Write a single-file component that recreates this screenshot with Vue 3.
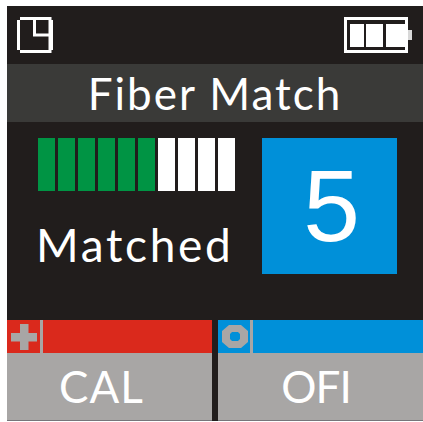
<script setup>
const bars = [1, 1, 1, 1, 1, 1, 0, 0, 0, 0]
</script>

<template>
  <div class="page">
    <div class="screen">
      <div class="status">
        <svg class="clock" width="36" height="36" viewBox="0 0 36 36">
          <path d="M3 1.500H33V34.500H3M1.500 3V33M34.500 3V33M17.500 1.500V18H34" fill="none" stroke="#fff" stroke-width="3" />
        </svg>
        <svg class="battery" width="68" height="36" viewBox="0 0 68 36">
          <rect x="1.500" y="1.500" width="61" height="33" fill="none" stroke="#fff" stroke-width="3" />
          <rect x="6" y="7" width="14" height="23" fill="#fff" />
          <rect x="22" y="7" width="17" height="23" fill="#fff" />
          <rect x="42" y="7" width="19" height="23" fill="#fff" />
          <rect x="64" y="13" width="4" height="10" fill="#d8d8d8" />
        </svg>
      </div>
      <div class="title">Fiber Match</div>
      <div class="main">
        <div class="left">
          <div class="bars">
            <span v-for="(b, i) in bars" :key="i" class="bar" :class="{ on: b }"></span>
          </div>
          <div class="state">Matched</div>
        </div>
        <div class="count">5</div>
      </div>
      <div class="keys">
        <div class="key">
          <div class="strip red">
            <div class="tag">
              <svg width="26" height="26" viewBox="0 0 26 26">
                <path d="M9 0H17.500V9H26V17.500H17.500V26H9V17.500H0V9H9Z" fill="#a8a6a5" />
              </svg>
            </div>
          </div>
          <div class="label cal">CAL</div>
        </div>
        <div class="key">
          <div class="strip blue">
            <div class="tag">
              <svg width="26" height="23" viewBox="0 0 26 23">
                <path d="M7 0H19L26 6V17L19 23H7L0 17V6ZM10 7L8 9V14L10 16H16L18 14V9L16 7Z" fill="#a8a6a5" fill-rule="evenodd" />
              </svg>
            </div>
          </div>
          <div class="label ofi">OFI</div>
        </div>
      </div>
    </div>
  </div>
</template>

<style>
html, body {
  background: #fff;
}
</style>

<style scoped>
.page {
  width: 423px;
  height: 422px;
  padding: 6px 0 1px 7px;
  box-sizing: border-box;
  font-family: Lato, "Open Sans", sans-serif;
  overflow: hidden;
}

.screen {
  height: 100%;
  display: flex;
  flex-direction: column;
  background: #211d1c;
  color: #fff;
}

.status {
  height: 58px;
  flex: none;
  display: flex;
  justify-content: space-between;
  align-items: flex-start;
  padding: 11px 11px 0 10px;
  box-sizing: border-box;
}

.title {
  height: 58px;
  flex: none;
  background: #3a3a38;
  text-align: center;
  font-size: 44px;
  line-height: 58px;
  letter-spacing: 2px;
}

.main {
  flex: 1;
  display: flex;
  justify-content: space-between;
  padding: 16px 26px 0 31px;
}

.bars {
  display: flex;
  gap: 3px;
}

.bar {
  width: 17px;
  height: 53px;
  background: #fff;
}

.bar.on {
  background: #009444;
}

.state {
  font-size: 46px;
  line-height: 52px;
  margin-top: 28px;
  letter-spacing: 2.700px;
  margin-left: -2px;
}

.count {
  width: 135px;
  height: 136px;
  padding-left: 4px;
  box-sizing: border-box;
  background: #0090d9;
  font-family: "Liberation Sans", Arial, sans-serif;
  font-size: 102px;
  line-height: 136px;
  text-align: center;
}

.keys {
  flex: none;
  display: flex;
  gap: 6px;
}

.key {
  flex: 1;
  height: 101px;
  display: flex;
  flex-direction: column;
  background: #a8a6a5;
  border-bottom: 1px solid #77757a;
  box-sizing: border-box;
}

.strip {
  height: 33px;
  flex: none;
}

.red {
  background: #da291c;
}

.blue {
  background: #0090d9;
}

.tag {
  width: 36px;
  height: 33px;
  display: flex;
  align-items: center;
  padding-left: 4px;
  box-sizing: border-box;
  border-right: 3px solid #a8a6a5;
}

.blue .tag {
  width: 35px;
}

.label {
  flex: 1;
  text-align: center;
  font-size: 44px;
  line-height: 67px;
}

.label.cal {
  padding-right: 16px;
  letter-spacing: 1px;
}

.label.ofi {
  padding-right: 9px;
  letter-spacing: -1px;
}
</style>
